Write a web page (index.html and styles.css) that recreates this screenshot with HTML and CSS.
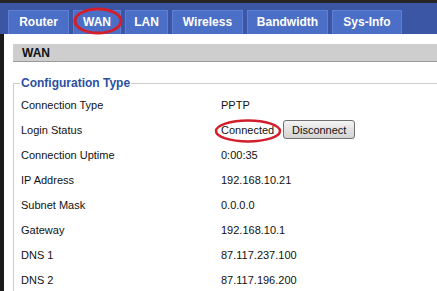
FILE: index.html
```html
<!DOCTYPE html>
<html lang="en">
<head>
    <meta charset="UTF-8">
    <meta name="viewport" content="width=device-width, initial-scale=1.0">
    <title>WAN - Router Status</title>
    <link rel="stylesheet" href="styles.css">
</head>
<body>
    <div class="top-strip"></div>

    <div class="tab-bar">
        <a class="tab tab-router" href="#">Router</a>
        <a class="tab tab-wan" href="#">WAN
            <svg class="mark" viewBox="0 0 50 28" width="50" height="28">
                <ellipse cx="25" cy="14" rx="23" ry="12" fill="none" stroke="#d21f2b" stroke-width="3"/>
            </svg>
        </a>
        <a class="tab tab-lan" href="#">LAN</a>
        <a class="tab tab-wireless" href="#">Wireless</a>
        <a class="tab tab-bandwidth" href="#">Bandwidth</a>
        <a class="tab tab-sysinfo" href="#">Sys-Info</a>
    </div>

    <div class="page">
        <div class="section-title">WAN</div>

        <fieldset class="config">
            <legend>Configuration Type</legend>
            <div class="info-grid">
                <div class="label">Connection Type</div>
                <div class="value">PPTP</div>

                <div class="label">Login Status</div>
                <div class="value">
                    <span class="status">Connected
                        <svg class="mark" viewBox="0 0 68 24" width="68" height="24">
                            <ellipse cx="34" cy="12" rx="32" ry="10.5" fill="none" stroke="#d21f2b" stroke-width="2.5"/>
                        </svg>
                    </span>
                    <button class="disconnect-button">Disconnect</button>
                </div>

                <div class="label">Connection Uptime</div>
                <div class="value">0:00:35</div>

                <div class="label">IP Address</div>
                <div class="value">192.168.10.21</div>

                <div class="label">Subnet Mask</div>
                <div class="value">0.0.0.0</div>

                <div class="label">Gateway</div>
                <div class="value">192.168.10.1</div>

                <div class="label">DNS 1</div>
                <div class="value">87.117.237.100</div>

                <div class="label">DNS 2</div>
                <div class="value">87.117.196.200</div>
            </div>
        </fieldset>
    </div>
</body>
</html>
```

FILE: styles.css
```css
body {
    font-family: 'Liberation Sans', Arial, sans-serif;
    margin: 0;
    padding: 0;
    background-color: #1b1b1b;
    color: #111111;
    height: 100vh;
    overflow: hidden;
}

.top-strip {
    height: 3px;
    background-color: #262626;
}

.tab-bar {
    height: 31px;
    display: flex;
    align-items: flex-end;
    gap: 4px;
    padding-left: 8px;
    background-color: #3a56a5;
}

.tab {
    position: relative;
    box-sizing: border-box;
    height: 24px;
    line-height: 23px;
    text-align: center;
    background-color: #4b6ec6;
    border: 1px solid #5f80d2;
    border-bottom: none;
    color: white;
    font-size: 12px;
    font-weight: bold;
    text-decoration: none;
}

.tab-router { width: 61px; }
.tab-wan { width: 48px; }
.tab-lan { width: 43px; }
.tab-wireless { width: 71px; }
.tab-bandwidth { width: 81px; }
.tab-sysinfo { width: 70px; }

.tab .mark {
    position: absolute;
    left: -1px;
    top: -4px;
}

.page {
    box-sizing: border-box;
    height: 257px;
    margin-left: 4px;
    background-color: white;
    padding: 10px 0 0 9px;
    overflow: hidden;
}

.section-title {
    height: 17px;
    line-height: 18px;
    background-color: #cecece;
    border-bottom: 1px solid #9a9a9a;
    padding-left: 9px;
    font-size: 12px;
    font-weight: bold;
}

.config {
    margin: 14px -10px 0 0;
    padding: 2px 0 0 7px;
    border: 1px solid #cccccc;
    border-bottom: none;
}

.config legend {
    padding: 0 1px;
    margin-left: -1px;
    color: #2d4f9f;
    font-size: 12px;
    font-weight: bold;
}

.info-grid {
    display: grid;
    grid-template-columns: 200px auto;
    grid-auto-rows: 25px;
    font-size: 11px;
}

.label,
.value {
    display: flex;
    align-items: center;
}

.status {
    position: relative;
}

.status .mark {
    position: absolute;
    left: -7px;
    top: -5px;
}

.disconnect-button {
    margin-left: 9px;
    width: 72px;
    height: 19px;
    padding: 0;
    font-family: 'Liberation Sans', Arial, sans-serif;
    font-size: 11px;
    color: #111111;
    background: linear-gradient(#f4f4f4, #e2e2e2 50%, #d3d3d3);
    border: 1px solid #707070;
    border-radius: 3px;
}
```
